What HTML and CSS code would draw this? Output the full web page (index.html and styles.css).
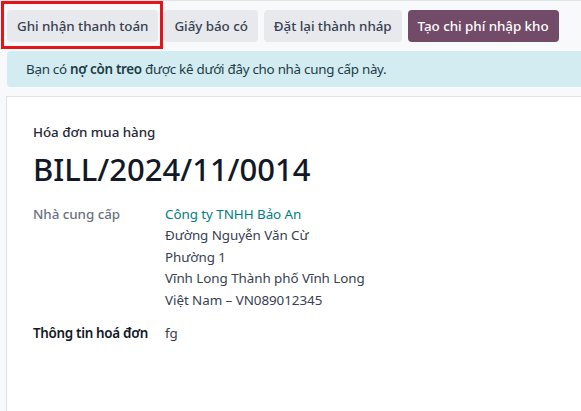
FILE: index.html
```html
<!DOCTYPE html>
<html lang="vi">
<head>
<meta charset="utf-8">
<link rel="stylesheet" href="styles.css">
</head>
<body>
<div class="statusbar">
  <button class="btn btn-marked">Ghi nhận thanh toán</button>
  <button class="btn">Giấy báo có</button>
  <button class="btn">Đặt lại thành nháp</button>
  <button class="btn btn-primary">Tạo chi phí nhập kho</button>
</div>
<div class="alert">Bạn có <b>nợ còn treo</b> được kê dưới đây cho nhà cung cấp này.</div>
<div class="sheet">
  <div class="doc-type">Hóa đơn mua hàng</div>
  <h1 class="doc-name">BILL/2024/11/0014</h1>
  <div class="field">
    <div class="label">Nhà cung cấp</div>
    <div class="value">
      <a class="link">Công ty TNHH Bảo An</a>
      <div>Đường Nguyễn Văn Cừ</div>
      <div>Phường 1</div>
      <div>Vĩnh Long Thành phố Vĩnh Long</div>
      <div>Việt Nam – VN089012345</div>
    </div>
  </div>
  <div class="field field-info">
    <div class="label label-strong">Thông tin hoá đơn</div>
    <div class="value">fg</div>
  </div>
</div>
</body>
</html>
```
FILE: styles.css
```css
html, body {
  margin: 0;
  height: 100%;
}
body {
  background: #f8f9fa;
  border-top: 1px solid #e2e4e8;
  box-sizing: border-box;
  font-family: "Noto Sans", "Open Sans", sans-serif;
  font-size: 13.4px;
  letter-spacing: -0.05px;
  color: #374151;
  overflow: hidden;
}
.statusbar {
  display: flex;
  gap: 6px;
  padding: 9px 0 0 7px;
}
.btn {
  position: relative;
  height: 32px;
  padding: 0 10px;
  border: 0;
  border-radius: 4px;
  background: #e7e9ed;
  color: #374151;
  font: 500 13.4px "Noto Sans", "Open Sans", sans-serif;
  letter-spacing: -0.05px;
  white-space: nowrap;
}
.btn-primary {
  background: #714b67;
  color: #fff;
}
.btn-marked::after {
  content: "";
  position: absolute;
  left: -6px;
  top: -9px;
  right: -5px;
  bottom: -7px;
  border: 3px solid #e4141b;
}
.alert {
  margin: 9px 0 0 7px;
  height: 36px;
  line-height: 36px;
  padding: 0 19px;
  background: #d2ecf1;
  border-radius: 4px 0 0 4px;
  color: #1e3b45;
  letter-spacing: -0.28px;
  white-space: nowrap;
}
.alert b {
  font-weight: 600;
}
.sheet {
  margin: 9px 0 0 6px;
  background: #fff;
  border: 1px solid #dee2e6;
  border-right: 0;
  height: 320px;
  box-sizing: border-box;
  padding: 26px 0 0 26px;
}
.doc-type {
  font-weight: 500;
  color: #1f2937;
}
.doc-name {
  margin: 9px 0 15px;
  font-size: 31px;
  font-weight: 500;
  letter-spacing: 0;
  color: #111827;
  line-height: 1.25;
}
.field {
  display: grid;
  grid-template-columns: 132px 1fr;
  line-height: 21.5px;
}
.label {
  color: #6b7280;
  font-weight: 500;
}
.label-strong {
  color: #111827;
  font-weight: 600;
  letter-spacing: -0.3px;
}
.link {
  display: block;
  color: #017e84;
}
.field-info {
  margin-top: 12px;
}
```
